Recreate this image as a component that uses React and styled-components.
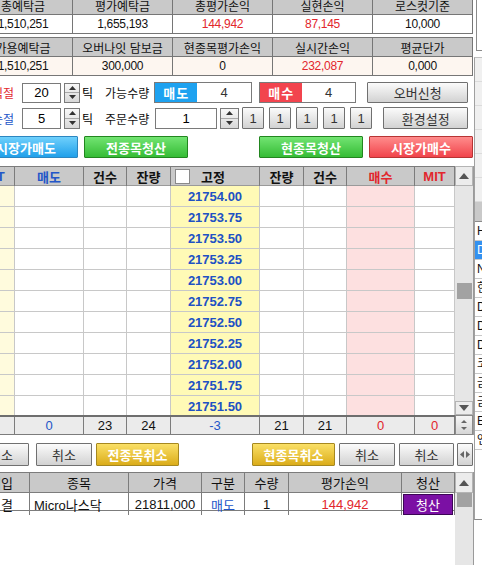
import React from "react";
import styled, { createGlobalStyle } from "styled-components";

const GlobalStyle = createGlobalStyle`
  html, body {
    margin: 0;
    padding: 0;
    background: #fff;
    overflow: hidden;
  }
  body {
    font-family: "Liberation Sans", "Noto Sans CJK KR", sans-serif;
    font-size: 12px;
    color: #000;
  }
`;

const RED = "#e2262c";
const BLUE = "#2356c8";

const PRICES = [
  "21754.00",
  "21753.75",
  "21753.50",
  "21753.25",
  "21753.00",
  "21752.75",
  "21752.50",
  "21752.25",
  "21752.00",
  "21751.75",
  "21751.50",
];

const SIDE_ITEMS = ["HSI", "DOW", "NQ", "한국", "DAX", "DX", "DJ", "코스피", "금", "금은", "EUR", "엔화"];

const BOOK_COLS = "42px 69px 43px 44px 89px 44px 43px 68px 40px";
const POS_COLS = "57px 99px 73px 43px 44px 113px 53px";

const VARIANTS = {
  blue: { top: "#6fd0fc", bottom: "#20a0ea", border: "#2c86c0" },
  green: { top: "#72e472", bottom: "#35bc35", border: "#22861f" },
  red: { top: "#ff8c8c", bottom: "#f1444b", border: "#b73434" },
  yellow: { top: "#fae066", bottom: "#dbac1a", border: "#a6881f" },
};

function Tri({ up, size = 7, color = "#333" }) {
  const h = Math.round(size * 0.57);
  return (
    <svg width={size} height={h} viewBox={`0 0 ${size} ${h}`}>
      <polygon
        points={up ? `0,${h} ${size / 2},0 ${size},${h}` : `0,0 ${size},0 ${size / 2},${h}`}
        fill={color}
      />
    </svg>
  );
}

function SideArrow({ right }) {
  return (
    <svg width="4" height="7" viewBox="0 0 4 7">
      <polygon points={right ? "0,0 4,3.5 0,7" : "4,0 0,3.5 4,7"} fill="#666" />
    </svg>
  );
}

function Spinner({ w, h, ml }) {
  return (
    <SpinBox $w={w} $h={h} $ml={ml}>
      <SpinHalf $top>
        <Tri up />
      </SpinHalf>
      <SpinHalf>
        <Tri />
      </SpinHalf>
    </SpinBox>
  );
}

export default function App() {
  return (
    <>
      <GlobalStyle />
      <Page>
        <Main>
          <InfoGrid>
            <HeadCell>총예탁금</HeadCell>
            <HeadCell>평가예탁금</HeadCell>
            <HeadCell>총평가손익</HeadCell>
            <HeadCell>실현손익</HeadCell>
            <HeadCell>로스컷기준</HeadCell>
            <ValueCell>1,510,251</ValueCell>
            <ValueCell>1,655,193</ValueCell>
            <ValueCell $color={RED}>144,942</ValueCell>
            <ValueCell $color={RED}>87,145</ValueCell>
            <ValueCell>10,000</ValueCell>
          </InfoGrid>

          <InfoGrid $mt={3}>
            <HeadCell>가용예탁금</HeadCell>
            <HeadCell>오버나잇 담보금</HeadCell>
            <HeadCell>현종목평가손익</HeadCell>
            <HeadCell>실시간손익</HeadCell>
            <HeadCell>평균단가</HeadCell>
            <ValueCell $tint>1,510,251</ValueCell>
            <ValueCell $tint>300,000</ValueCell>
            <ValueCell $tint>0</ValueCell>
            <ValueCell $tint $color={RED}>
              232,087
            </ValueCell>
            <ValueCell $tint>0,000</ValueCell>
          </InfoGrid>

          <ControlRow $mt={6} $h={21}>
            <Label $w={49} $color={RED}>
              익절
            </Label>
            <NumInput $w={39} $h={20}>20</NumInput>
            <Spinner w={16} h={20} ml={3} />
            <Unit>틱</Unit>
            <Caption $ml={12}>가능수량</Caption>
            <SideBox $ml={5} $w={98}>
              <SideTag $bg="#1ea2f0">매도</SideTag>
              <SideQty>4</SideQty>
            </SideBox>
            <SideBox $ml={7} $w={97}>
              <SideTag $bg="#f2444e">매수</SideTag>
              <SideQty>4</SideQty>
            </SideBox>
            <Btn $ml={11} $w={101} $h={21}>
              오버신청
            </Btn>
          </ControlRow>

          <ControlRow $mt={4} $h={22}>
            <Label $w={49} $color={BLUE}>
              손절
            </Label>
            <NumInput $w={39} $h={21}>5</NumInput>
            <Spinner w={16} h={21} ml={3} />
            <Unit>틱</Unit>
            <Caption $ml={12}>주문수량</Caption>
            <NumInput $ml={6} $w={62} $h={21}>
              1
            </NumInput>
            <Spinner w={19} h={21} ml={3} />
            {[3, 5, 5, 5, 5].map((ml, i) => (
              <Btn key={i} $ml={ml} $w={22} $h={22}>
                1
              </Btn>
            ))}
            <Btn $ml={11} $w={85} $h={22}>
              환경설정
            </Btn>
          </ControlRow>

          <ActionRow $mt={7}>
            <ActionGroup>
              <ColorBtn $v="blue" $w={104}>
                시장가매도
              </ColorBtn>
              <ColorBtn $v="green" $w={104}>
                전종목청산
              </ColorBtn>
            </ActionGroup>
            <ActionGroup>
              <ColorBtn $v="green" $w={104}>
                현종목청산
              </ColorBtn>
              <ColorBtn $v="red" $w={104}>
                시장가매수
              </ColorBtn>
            </ActionGroup>
          </ActionRow>

          <BookFrame>
            <BookTable>
              <BookHead>
                <HCell $color={BLUE}>MIT</HCell>
                <HCell $color={BLUE}>매도</HCell>
                <HCell>건수</HCell>
                <HCell>잔량</HCell>
                <HCell $start>
                  <CheckBox />
                  <FixText>고정</FixText>
                </HCell>
                <HCell>잔량</HCell>
                <HCell>건수</HCell>
                <HCell $color={RED}>매수</HCell>
                <HCell $color={RED}>MIT</HCell>
              </BookHead>
              <BookBody>
                {PRICES.map((p) => (
                  <BookRow key={p}>
                    <BCell $bg="#fffbdd" />
                    <BCell />
                    <BCell />
                    <BCell />
                    <BCell $bg="#fffab6">
                      <Price>{p}</Price>
                    </BCell>
                    <BCell />
                    <BCell />
                    <BCell $bg="#fde0e0" />
                    <BCell />
                  </BookRow>
                ))}
              </BookBody>
              <BookSum>
                <SCell />
                <SCell $color={BLUE}>0</SCell>
                <SCell>23</SCell>
                <SCell>24</SCell>
                <SCell $color={BLUE}>-3</SCell>
                <SCell>21</SCell>
                <SCell>21</SCell>
                <SCell $color={RED}>0</SCell>
                <SCell $color={RED}>0</SCell>
              </BookSum>
            </BookTable>
            <ScrollCol>
              <ArrowBox $h={20}>
                <Tri up size={10} color="#555" />
              </ArrowBox>
              <Track>
                <Thumb $mt={97} />
              </Track>
              <ArrowBox $h={14}>
                <Tri size={10} color="#555" />
              </ArrowBox>
              <SumSpin>
                <Tri up size={6} color="#666" />
                <Tri size={6} color="#666" />
              </SumSpin>
            </ScrollCol>
          </BookFrame>

          <ControlRow $mt={8} $h={23}>
            <Btn $w={56} $h={23}>
              취소
            </Btn>
            <Btn $ml={7} $w={56} $h={23}>
              취소
            </Btn>
            <ColorBtn $v="yellow" $ml={4} $w={83} $h={23}>
              전종목취소
            </ColorBtn>
            <ColorBtn $v="yellow" $ml={73} $w={83} $h={23}>
              현종목취소
            </ColorBtn>
            <Btn $ml={4} $w={56} $h={23}>
              취소
            </Btn>
            <Btn $ml={4} $w={55} $h={23}>
              취소
            </Btn>
            <Btn $ml={3} $w={16} $h={23}>
              <Arrows>
                <SideArrow />
                <SideArrow right />
              </Arrows>
            </Btn>
          </ControlRow>

          <PosFrame>
            <PosTable>
              <PosHead>
                <PCell>매입</PCell>
                <PCell>종목</PCell>
                <PCell>가격</PCell>
                <PCell>구분</PCell>
                <PCell>수량</PCell>
                <PCell>평가손익</PCell>
                <PCell>청산</PCell>
              </PosHead>
              <PosRow>
                <PCell>미결</PCell>
                <PCell $left>Micro나스닥</PCell>
                <PCell>21811,000</PCell>
                <PCell $color={BLUE}>매도</PCell>
                <PCell>1</PCell>
                <PCell $color={RED}>144,942</PCell>
                <PCell $pad>
                  <ClearBtn>청산</ClearBtn>
                </PCell>
              </PosRow>
            </PosTable>
            <ScrollCol>
              <ArrowBox $h={21}>
                <Tri up size={10} color="#555" />
              </ArrowBox>
              <Track>
                <Thumb $mt={0} $h={14} />
              </Track>
            </ScrollCol>
          </PosFrame>
        </Main>

        <SideStrip>
          <SideTop />
          <SideList>
            {[0, 1, 2, 3, 4, 5].map((i) => (
              <SideFill key={i} />
            ))}
            <SideHead />
            {SIDE_ITEMS.map((s, i) => (
              <SideItem key={s} $sel={i === 1}>
                {s}
              </SideItem>
            ))}
            <SideRest />
          </SideList>
        </SideStrip>
      </Page>
    </>
  );
}

const Page = styled.div`
  display: flex;
  width: 482px;
  height: 565px;
  overflow: hidden;
`;

const Main = styled.div`
  display: flex;
  flex-direction: column;
  flex-shrink: 0;
  width: 501px;
  margin-left: -27px;
  margin-top: -5px;
`;

const InfoGrid = styled.div`
  box-sizing: border-box;
  display: grid;
  grid-template-columns: 98px repeat(4, 99px);
  grid-auto-rows: 18px;
  gap: 1px;
  width: 500px;
  margin-top: ${(p) => p.$mt || 0}px;
  background: #767676;
  border: 1px solid #767676;
`;

const HeadCell = styled.div`
  display: flex;
  align-items: center;
  justify-content: center;
  background: #c9c9c9;
  font-size: 12px;
  color: #111;
  white-space: nowrap;
`;

const ValueCell = styled.div`
  display: flex;
  align-items: center;
  justify-content: center;
  background: ${(p) => (p.$tint ? "#fdf6f0" : "#fff")};
  color: ${(p) => p.$color || "#111"};
  font-size: 12px;
  letter-spacing: -0.3px;
`;

const ControlRow = styled.div`
  display: flex;
  align-items: center;
  height: ${(p) => p.$h}px;
  margin-top: ${(p) => p.$mt || 0}px;
`;

const Label = styled.span`
  box-sizing: border-box;
  flex-shrink: 0;
  width: ${(p) => p.$w}px;
  padding-right: 8px;
  text-align: right;
  color: ${(p) => p.$color};
  font-size: 12px;
`;

const Caption = styled.span`
  flex-shrink: 0;
  margin-left: ${(p) => p.$ml || 0}px;
  font-size: 12px;
  color: #111;
`;

const Unit = styled.span`
  flex-shrink: 0;
  margin-left: 2px;
  font-size: 12px;
`;

const NumInput = styled.div`
  box-sizing: border-box;
  display: flex;
  align-items: center;
  justify-content: center;
  flex-shrink: 0;
  width: ${(p) => p.$w}px;
  height: ${(p) => p.$h}px;
  margin-left: ${(p) => p.$ml || 0}px;
  background: #fff;
  border: 1px solid #7a7a7a;
  font-size: 13px;
`;

const SpinBox = styled.div`
  box-sizing: border-box;
  display: flex;
  flex-direction: column;
  flex-shrink: 0;
  width: ${(p) => p.$w}px;
  height: ${(p) => p.$h}px;
  margin-left: ${(p) => p.$ml || 0}px;
  border: 1px solid #7a7a7a;
  background: linear-gradient(#f8f8f8, #d8d8d8);
`;

const SpinHalf = styled.div`
  flex: 1;
  display: flex;
  align-items: center;
  justify-content: center;
  border-bottom: ${(p) => (p.$top ? "1px solid #a8a8a8" : "none")};
`;

const SideBox = styled.div`
  box-sizing: border-box;
  display: flex;
  flex-shrink: 0;
  width: ${(p) => p.$w}px;
  height: 21px;
  margin-left: ${(p) => p.$ml || 0}px;
  border: 1px solid #7a7a7a;
`;

const SideTag = styled.div`
  display: flex;
  align-items: center;
  justify-content: center;
  width: 42px;
  background: ${(p) => p.$bg};
  color: #fff;
  font-weight: bold;
  font-size: 13px;
  letter-spacing: 1px;
`;

const SideQty = styled.div`
  flex: 1;
  display: flex;
  align-items: center;
  justify-content: center;
  background: #fff;
  color: #333;
  font-size: 13px;
`;

const Btn = styled.button`
  box-sizing: border-box;
  display: flex;
  align-items: center;
  justify-content: center;
  flex-shrink: 0;
  width: ${(p) => p.$w}px;
  height: ${(p) => p.$h || 22}px;
  margin-left: ${(p) => p.$ml || 0}px;
  padding: 0;
  border: 1px solid #707070;
  border-radius: 1px;
  background: linear-gradient(#fbfbfb, #d2d2d2);
  color: #333;
  font-family: inherit;
  font-size: 13px;
`;

const ColorBtn = styled(Btn)`
  background: ${(p) => `linear-gradient(${VARIANTS[p.$v].top}, ${VARIANTS[p.$v].bottom})`};
  border-color: ${(p) => VARIANTS[p.$v].border};
  color: #fff;
  font-weight: bold;
`;

const ActionRow = styled.div`
  display: flex;
  justify-content: space-between;
  width: 500px;
  height: 22px;
  padding-left: 1px;
  box-sizing: border-box;
  margin-top: ${(p) => p.$mt || 0}px;
`;

const ActionGroup = styled.div`
  display: flex;
  gap: 6px;
`;

const BookFrame = styled.div`
  display: flex;
  margin-top: 8px;
`;

const BookTable = styled.div`
  display: flex;
  flex-direction: column;
  width: 482px;
`;

const BookHead = styled.div`
  box-sizing: border-box;
  display: grid;
  grid-template-columns: ${BOOK_COLS};
  height: 20px;
  background: #c9c9c9;
  border-top: 1px solid #7c7c7c;
  border-bottom: 1px solid #9a9a9a;
`;

const HCell = styled.div`
  box-sizing: border-box;
  display: flex;
  align-items: center;
  justify-content: ${(p) => (p.$start ? "flex-start" : "center")};
  padding-left: ${(p) => (p.$start ? 4 : 0)}px;
  border-right: 1px solid #7c7c7c;
  color: ${(p) => p.$color || "#111"};
  font-weight: bold;
  font-size: 13px;
`;

const CheckBox = styled.span`
  box-sizing: border-box;
  width: 15px;
  height: 15px;
  background: #fff;
  border: 1px solid #8a8a8a;
`;

const FixText = styled.span`
  margin-left: 11px;
`;

const BookBody = styled.div`
  height: 229px;
  overflow: hidden;
`;

const BookRow = styled.div`
  display: grid;
  grid-template-columns: ${BOOK_COLS};
  height: 21px;
`;

const BCell = styled.div`
  box-sizing: border-box;
  display: flex;
  align-items: center;
  justify-content: center;
  background: ${(p) => p.$bg || "#fff"};
  border-right: 1px solid #c8c8c8;
  border-bottom: 1px solid #c8c8c8;
`;

const Price = styled.span`
  color: #2051c4;
  font-weight: bold;
  font-size: 13px;
`;

const BookSum = styled.div`
  box-sizing: border-box;
  display: grid;
  grid-template-columns: ${BOOK_COLS};
  height: 20px;
  background: #ebebeb;
  border-top: 2px solid #6e6e6e;
  border-bottom: 1px solid #7c7c7c;
`;

const SCell = styled.div`
  box-sizing: border-box;
  display: flex;
  align-items: center;
  justify-content: center;
  border-right: 1px solid #7c7c7c;
  color: ${(p) => p.$color || "#111"};
  font-size: 13px;
`;

const ScrollCol = styled.div`
  box-sizing: border-box;
  display: flex;
  flex-direction: column;
  width: 19px;
  background: #e6e6e6;
  border-right: 1px solid #9a9a9a;
`;

const ArrowBox = styled.div`
  box-sizing: border-box;
  display: flex;
  align-items: center;
  justify-content: center;
  height: ${(p) => p.$h}px;
  background: #ececec;
  border: 1px solid #b4b4b4;
`;

const Track = styled.div`
  flex: 1;
  display: flex;
  flex-direction: column;
  align-items: center;
`;

const Thumb = styled.div`
  width: 15px;
  height: ${(p) => p.$h || 16}px;
  margin-top: ${(p) => p.$mt}px;
  background: #a2a2a2;
`;

const SumSpin = styled.div`
  box-sizing: border-box;
  display: flex;
  flex-direction: column;
  align-items: center;
  justify-content: center;
  gap: 4px;
  height: 20px;
  background: linear-gradient(#f6f6f6, #d6d6d6);
  border: 1px solid #8a8a8a;
`;

const Arrows = styled.span`
  display: flex;
  align-items: center;
  gap: 2px;
`;

const PosFrame = styled.div`
  display: flex;
  height: 93px;
  margin-top: 6px;
`;

const PosTable = styled.div`
  width: 482px;
`;

const PosHead = styled.div`
  box-sizing: border-box;
  display: grid;
  grid-template-columns: ${POS_COLS};
  height: 21px;
  background: #c9c9c9;
  border-top: 1px solid #7c7c7c;
  border-bottom: 1px solid #7c7c7c;
`;

const PosRow = styled.div`
  box-sizing: border-box;
  display: grid;
  grid-template-columns: ${POS_COLS};
  height: 18px;
  background: #fff;
  border-bottom: 1px solid #7c7c7c;
`;

const PCell = styled.div`
  box-sizing: border-box;
  display: flex;
  align-items: center;
  justify-content: ${(p) => (p.$left ? "flex-start" : "center")};
  padding: ${(p) => (p.$pad ? "1px 1px 0 1px" : p.$left ? "0 0 0 4px" : "0")};
  border-right: 1px solid #7c7c7c;
  color: ${(p) => p.$color || "#111"};
  font-size: 13px;
  white-space: nowrap;
`;

const ClearBtn = styled.div`
  box-sizing: border-box;
  display: flex;
  align-items: center;
  justify-content: center;
  width: 100%;
  height: 100%;
  background: #7b10a4;
  border: 1px solid #3c0656;
  color: #fff;
  font-size: 13px;
`;

const SideStrip = styled.div`
  display: flex;
  flex-direction: column;
  flex-shrink: 0;
  width: 8px;
  overflow: hidden;
  background: #fff;
`;

const SideTop = styled.div`
  height: 50px;
  margin-left: 2px;
  border-left: 1px solid #8a8a8a;
  border-bottom: 1px solid #8a8a8a;
`;

const SideList = styled.div`
  display: flex;
  flex-direction: column;
  height: 461px;
  margin-top: 6px;
  background: #fff;
  border-left: 1px solid #a0a0a0;
  border-top: 1px solid #c0c0c0;
  border-bottom: 1px solid #8a8a8a;
`;

const SideFill = styled.div`
  height: 23px;
  background: #f0f0f0;
  border-bottom: 1px solid #dcdcdc;
`;

const SideHead = styled.div`
  height: 19px;
  background: #c9c9c9;
  border-bottom: 1px solid #8a8a8a;
`;

const SideItem = styled.div`
  box-sizing: border-box;
  height: 19px;
  padding-left: 2px;
  line-height: 18px;
  white-space: nowrap;
  font-size: 12px;
  background: ${(p) => (p.$sel ? "#3391f0" : "#fff")};
  color: ${(p) => (p.$sel ? "#fff" : "#111")};
  border-bottom: 1px solid #c8c8c8;
`;

const SideRest = styled.div`
  flex: 1;
  background: #fff;
`;
